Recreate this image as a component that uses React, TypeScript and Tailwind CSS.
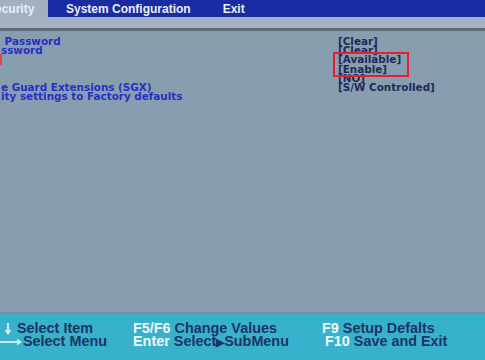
const rows: { label: string; value: string }[] = [
  { label: ' Password', value: '[Clear]' },
  { label: 'ssword', value: '[Clear]' },
  { label: '', value: '[Available]' },
  { label: '', value: '[Enable]' },
  { label: '', value: '[NO]' },
  { label: 'e Guard Extensions (SGX)', value: '[S/W Controlled]' },
  { label: 'ity settings to Factory defaults', value: '' },
]

const App = () => {
  return (
    <div className="w-[485px] h-[360px] overflow-hidden flex flex-col bg-[#899db1] font-['Liberation_Sans',Arial,sans-serif]">
      {/* menu bar */}
      <div className="h-[17px] flex items-center bg-[#1a2ba3] text-[12px] font-bold text-[#e9eef8] leading-none">
        <div className="h-full w-[48px] shrink-0 overflow-hidden flex items-center bg-[#a3b0c2]">
          <span className="-ml-[13px] whitespace-nowrap">Security</span>
        </div>
        <div className="ml-[18px]">System Configuration</div>
        <div className="ml-[32px]">Exit</div>
      </div>
      <div className="h-[11px] bg-[#a5b1c2]"></div>
      <div className="h-[3px] bg-[#5d6b79]"></div>

      {/* settings */}
      <div className="relative flex-1 pt-[6px] font-['DejaVu_Sans',sans-serif] text-[10.4px] font-bold leading-[9.2px]">
        {rows.map((r, i) => (
          <div key={i} className="flex h-[9.2px]">
            <div className="w-[338px] whitespace-pre pl-[1px] text-[#2431c4]">{r.label}</div>
            <div className="text-[#1f2a55]">{r.value}</div>
          </div>
        ))}
        <div className="absolute left-0 top-[23px] w-[2px] h-[11px] bg-[#d84a4a]"></div>
        <div className="absolute left-[333px] top-[21px] w-[76px] h-[25px] border-2 border-[#e3202b]"></div>
      </div>

      {/* help bar */}
      <div className="h-[2px] bg-[#7b8c9b]"></div>
      <div className="h-[46px] bg-[#38b1cd] flex pt-[8px] text-[14.4px] font-bold leading-[13px] text-[#1b3564]">
        <div className="w-[133px] flex flex-col">
          <div className="flex items-center">
            <svg width="17" height="13" viewBox="0 0 17 13" className="shrink-0">
              <path d="M8 1 V10" stroke="#eef8fb" strokeWidth="1.6" />
              <path d="M5.5 8 L8 11.5 L10.5 8" stroke="#eef8fb" strokeWidth="1.4" fill="none" />
            </svg>
            <span>Select Item</span>
          </div>
          <div className="flex items-center">
            <svg width="23" height="13" viewBox="0 0 23 13" className="shrink-0">
              <path d="M0 7 H20" stroke="#eef8fb" strokeWidth="1.6" />
              <path d="M17 4.5 L20.5 7 L17 9.5" stroke="#eef8fb" strokeWidth="1.4" fill="none" />
            </svg>
            <span>Select Menu</span>
          </div>
        </div>
        <div className="w-[189px] flex flex-col">
          <div><span className="text-[#eef8fb]">F5/F6</span> Change Values</div>
          <div><span className="text-[#eef8fb]">Enter</span> Select<span className="text-[11px]">▶</span>SubMenu</div>
        </div>
        <div className="flex flex-col">
          <div><span className="text-[#eef8fb]">F9</span> Setup Defalts</div>
          <div className="pl-[3px]"><span className="text-[#eef8fb]">F10</span> Save and Exit</div>
        </div>
      </div>
    </div>
  )
}

export default App
